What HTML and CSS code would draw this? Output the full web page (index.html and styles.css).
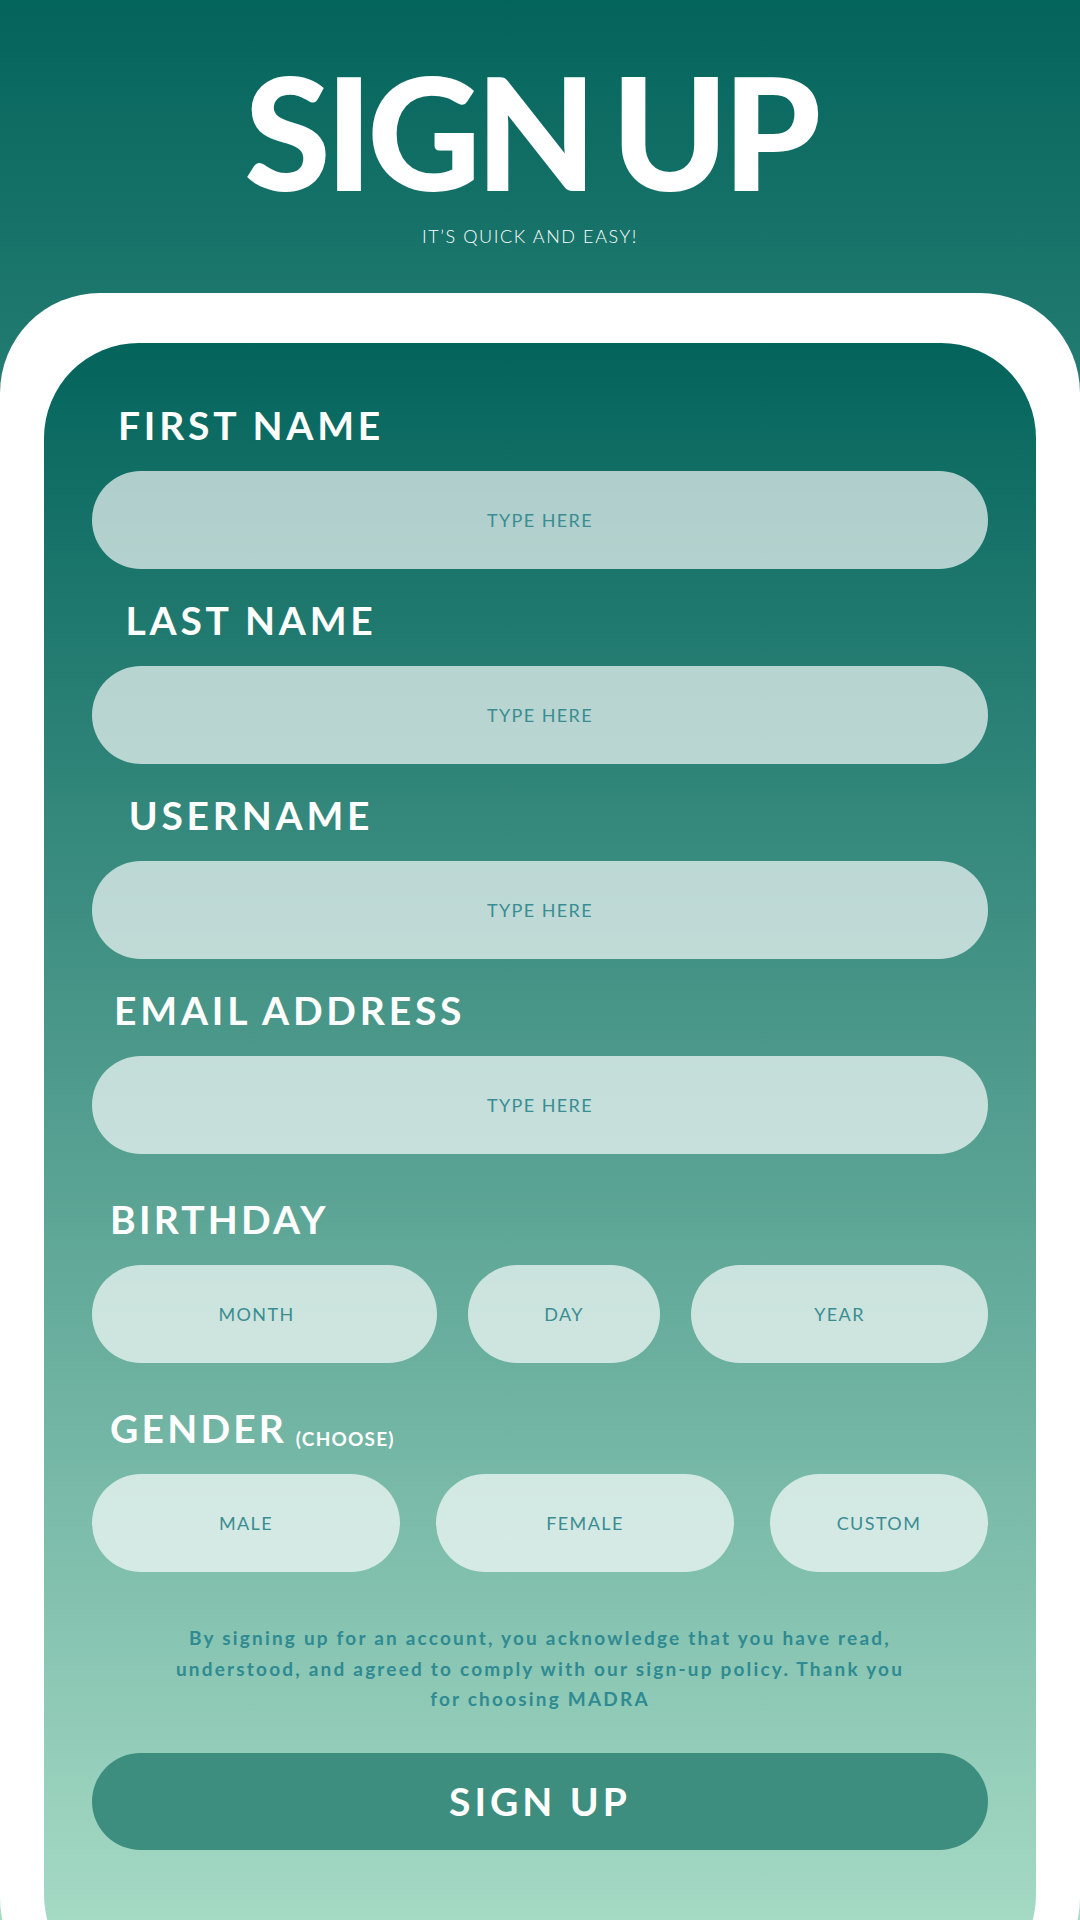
FILE: index.html
```html
<!DOCTYPE html>
<html lang="en">
<head>
  <meta charset="UTF-8">
  <meta name="viewport" content="width=device-width, initial-scale=1.0">
  <title>Sign Up</title>
  <link rel="stylesheet" href="styles.css">
</head>
<body>
  <header class="top">
    <h1 class="title">SIGN UP</h1>
    <p class="tagline">IT’S QUICK AND EASY!</p>
  </header>

  <main class="card">
    <form class="panel" onsubmit="return false">
      <label class="label label-center" for="first">FIRST NAME</label>
      <input class="field" id="first" type="text" placeholder="TYPE HERE">

      <label class="label label-center" for="last">LAST NAME</label>
      <input class="field" id="last" type="text" placeholder="TYPE HERE">

      <label class="label label-center" for="user">USERNAME</label>
      <input class="field" id="user" type="text" placeholder="TYPE HERE">

      <label class="label label-left" for="email">EMAIL ADDRESS</label>
      <input class="field" id="email" type="email" placeholder="TYPE HERE">

      <div class="label label-left section">BIRTHDAY</div>
      <div class="row row-birthday">
        <input class="field field-month" type="text" placeholder="MONTH">
        <input class="field" type="text" placeholder="DAY">
        <input class="field" type="text" placeholder="YEAR">
      </div>

      <div class="label label-left section">GENDER <span class="hint">(CHOOSE)</span></div>
      <div class="row row-gender">
        <button class="field choice" type="button">MALE</button>
        <button class="field choice" type="button">FEMALE</button>
        <button class="field choice" type="button">CUSTOM</button>
      </div>

      <p class="policy">
        By signing up for an account, you acknowledge that you have read,<br>
        understood, and agreed to comply with our sign-up policy. Thank you<br>
        for choosing MADRA
      </p>

      <button class="submit" type="submit">SIGN UP</button>
    </form>
  </main>
</body>
</html>
```

FILE: styles.css
```css
html, body { margin: 0; }
body {
  height: 1920px;
  overflow: hidden;
  padding-top: 71px;
  box-sizing: border-box;
  font-family: "Lato", "Liberation Sans", sans-serif;
  background: linear-gradient(180deg, #03645c 0px, #a8dcc6 1920px);
  color: #fff;
}

.top { text-align: center; padding-right: 20px; }
.title {
  margin: 0;
  font-size: 157px;
  line-height: 118px;
  font-weight: 900;
  letter-spacing: -5.5px;
  word-spacing: -12px;
}
.tagline {
  margin: 36px 0 0;
  font-size: 18px;
  line-height: 22px;
  font-weight: 300;
  letter-spacing: 1.6px;
}

.card {
  margin-top: 46px;
  background: #fff;
  border-radius: 100px;
  padding: 50px 44px 8px;
}
.panel {
  display: flex;
  flex-direction: column;
  padding: 36px 48px 140px;
  border-radius: 95px;
  background: linear-gradient(180deg, #03645c 0%, #acdfc9 100%);
}

.label {
  display: block;
  height: 92px;
  line-height: 92px;
  font-size: 39px;
  font-weight: 700;
  letter-spacing: 3.8px;
  color: #fff;
}
.label-center { width: 318px; text-align: center; margin-top: 5px; }
.label-center:first-child { margin-top: 0; }
.label-left { padding-left: 22px; margin-top: 5px; }
.section { margin-top: 19px; padding-left: 18px; letter-spacing: 3.2px; }
.hint {
  font-size: 19px;
  letter-spacing: 1.2px;
  vertical-align: -3px;
  margin-left: -4px;
}

.field {
  box-sizing: border-box;
  height: 98px;
  width: 100%;
  border: none;
  border-radius: 49px;
  background: rgba(255, 255, 255, 0.67);
  font-family: inherit;
  font-size: 18px;
  font-weight: 400;
  letter-spacing: 1.4px;
  color: #3a8d92;
  text-align: center;
  outline: none;
}
.field::placeholder { color: #3a8d92; opacity: 1; }
.field-month { padding-right: 18px; }
.choice { cursor: pointer; }

.row { display: grid; }
.row-birthday { grid-template-columns: 345px 192px 1fr; gap: 31px; }
.row-gender { grid-template-columns: 308px 298px 1fr; gap: 36px; }

.policy {
  margin: 51px 0 0;
  text-align: center;
  font-size: 19px;
  line-height: 30.5px;
  font-weight: 700;
  letter-spacing: 2.2px;
  color: #2f8a91;
}

.submit {
  margin-top: 38px;
  height: 97px;
  border: none;
  border-radius: 49px;
  background: #3d8e7e;
  color: #fff;
  font-family: inherit;
  font-size: 39px;
  font-weight: 700;
  letter-spacing: 4px;
  cursor: pointer;
}
```
